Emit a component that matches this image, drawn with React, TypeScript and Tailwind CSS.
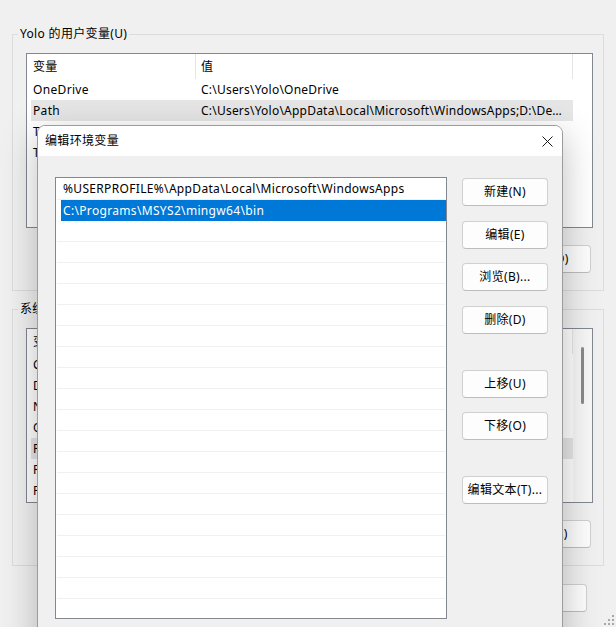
import React from 'react';

type Row = [string, string];

const userRows: Row[] = [
  ['OneDrive', 'C:\\Users\\Yolo\\OneDrive'],
  ['Path', 'C:\\Users\\Yolo\\AppData\\Local\\Microsoft\\WindowsApps;D:\\Dev\\bin'],
  ['TEMP', 'C:\\Users\\Yolo\\AppData\\Local\\Temp'],
  ['TMP', 'C:\\Users\\Yolo\\AppData\\Local\\Temp'],
];

const systemRows: Row[] = [
  ['ComSpec', 'C:\\Windows\\system32\\cmd.exe'],
  ['DriverData', 'C:\\Windows\\System32\\Drivers\\DriverData'],
  ['NUMBER_OF_PROCESSORS', '16'],
  ['OS', 'Windows_NT'],
  ['Path', 'C:\\Windows\\system32;C:\\Windows;C:\\Windows\\System32\\Wbem;C:\\Windows\\System32\\WindowsPowerShell\\v1.0\\;C:\\Windows\\System32\\OpenSSH\\'],
  ['PATHEXT', '.COM;.EXE;.BAT;.CMD;.VBS;.VBE;.JS;.JSE;.WSF;.WSH;.MSC'],
  ['PROCESSOR_ARCHITECTURE', 'AMD64'],
];

const pathEntries = [
  '%USERPROFILE%\\AppData\\Local\\Microsoft\\WindowsApps',
  'C:\\Programs\\MSYS2\\mingw64\\bin',
];

const WinButton: React.FC<{label: string, className?: string}> = ({label, className = ''}) => (
  <div className={`flex h-[28px] w-[86px] shrink-0 items-center justify-center rounded-[4px] border border-[#d0d0d0] border-b-[#bdbdbd] bg-[#fdfdfd] text-[12px] leading-none ${className}`}>
    {label}
  </div>
);

// report-style list with a header, like the Windows ListView
const VarList: React.FC<{rows: Row[], active: number, scroll?: boolean}> = ({rows, active, scroll}) => (
  <div className="flex h-[175px] overflow-hidden border border-[#828790] bg-white">
    <div className="flex w-[546px] shrink-0 flex-col">
      <div className="flex h-[25px] shrink-0 items-center">
        <div className="flex h-full w-[169px] items-center border-r border-[#e5e5e5] pl-[6px]">变量</div>
        <div className="flex h-full flex-1 items-center border-r border-[#e5e5e5] pl-[5px]">值</div>
      </div>
      {rows.map(([name, value], i) => (
        <div key={name} className={`ml-[4px] flex h-[21px] shrink-0 items-center ${i === active ? 'bg-[#e6e6e6]' : ''}`}>
          <div className="w-[165px] shrink-0 truncate pl-[2px]">{name}</div>
          <div className="min-w-0 flex-1 truncate pl-[5px] pr-[6px] tracking-[0.22px]">{value}</div>
        </div>
      ))}
    </div>
    {scroll ? (
      <div className="flex flex-1 justify-center bg-[#f7f7f7]">
        <div className="mt-[18px] h-[57px] w-[3px] rounded-full bg-[#8a8a8a]" />
      </div>
    ) : (
      <div className="flex-1" />
    )}
  </div>
);

const GroupBox: React.FC<{title: string, className?: string, children: React.ReactNode}> = ({title, className = '', children}) => (
  <fieldset className={`border border-[#dcdcdc] pb-[17px] ${className}`}>
    <legend className="ml-[5px] px-[2px] leading-[16px]">{title}</legend>
    <div className="pl-[13px] pr-[10px] pt-[11px]">{children}</div>
  </fieldset>
);

const EditDialog: React.FC = () => (
  <div className="absolute left-[37px] top-[125px] flex h-[540px] w-[526px] flex-col rounded-t-[8px] border border-[#9c9c9c] bg-[#f0f0f0] shadow-[0_10px_36px_rgba(0,0,0,0.26)]">
    <div className="flex h-[30px] shrink-0 items-center justify-between rounded-t-[7px] bg-white pl-[7px] pr-[9px]">
      <span>编辑环境变量</span>
      <svg width="11" height="11" viewBox="0 0 11 11" fill="none" stroke="#1a1a1a" strokeWidth="1">
        <path d="M0.5 0.5 L10.5 10.5 M10.5 0.5 L0.5 10.5" />
      </svg>
    </div>
    <div className="flex pl-[17px] pt-[21px]">
      <div className="h-[442px] w-[392px] shrink-0 overflow-hidden border border-[#828790] bg-white pt-[1px]">
        {Array.from({length: 21}).map((_, i) => {
          const text = pathEntries[i] ?? '';
          if (i === 1) {
            return (
              <div key={i} className="ml-[5px] flex h-[21px] items-center bg-[#0078d7] pl-[2px] text-white">{text}</div>
            );
          }
          return (
            <div key={i} className="flex h-[21px] flex-col">
              <div className="ml-[5px] flex h-[20px] items-center whitespace-nowrap pl-[2px]">{text}</div>
              <div className="mx-[1px] h-[1px] bg-[#f0f0f0]" />
            </div>
          );
        })}
      </div>
      <div className="ml-[15px] flex flex-col pt-[1px]">
        <WinButton label="新建(N)" />
        <WinButton label="编辑(E)" className="mt-[15px]" />
        <WinButton label="浏览(B)..." className="mt-[14px]" />
        <WinButton label="删除(D)" className="mt-[15px]" />
        <WinButton label="上移(U)" className="mt-[36px]" />
        <WinButton label="下移(O)" className="mt-[14px]" />
        <WinButton label="编辑文本(T)..." className="mt-[36px]" />
      </div>
    </div>
  </div>
);

const App: React.FC = () => {
  return (
    <div className="relative h-[627px] w-[616px] overflow-hidden bg-[#f0f0f0] font-['Noto_Sans','Noto_Sans_CJK_SC',sans-serif] text-[12px] tracking-[0.33px] text-black">
      <div className="pl-[12px] pr-[12px] pt-[26px]">
        <GroupBox title="Yolo 的用户变量(U)">
          <VarList rows={userRows} active={1} />
          <div className="mt-[17px] flex justify-end gap-[10px] pr-[2px]">
            <WinButton label="新建(N)..." />
            <WinButton label="编辑(E)..." />
            <WinButton label="删除(D)" />
          </div>
        </GroupBox>
        <GroupBox title="系统变量(S)" className="mt-[10px]">
          <VarList rows={systemRows} active={4} scroll />
          <div className="mt-[17px] flex justify-end gap-[10px] pr-[2px]">
            <WinButton label="新建(W)..." />
            <WinButton label="编辑(I)..." />
            <WinButton label="删除(L)" />
          </div>
        </GroupBox>
        <div className="mt-[18px] flex justify-end gap-[10px] pr-[17px]">
          <WinButton label="确定" />
          <WinButton label="取消" />
        </div>
      </div>
      <svg className="absolute bottom-[1px] right-[1px]" width="11" height="11" viewBox="0 0 11 11" fill="#a8a8a8">
        <rect x="8" y="0" width="2" height="2" />
        <rect x="4" y="4" width="2" height="2" />
        <rect x="8" y="4" width="2" height="2" />
        <rect x="0" y="8" width="2" height="2" />
        <rect x="4" y="8" width="2" height="2" />
        <rect x="8" y="8" width="2" height="2" />
      </svg>
      <EditDialog />
    </div>
  );
};

export default App;
